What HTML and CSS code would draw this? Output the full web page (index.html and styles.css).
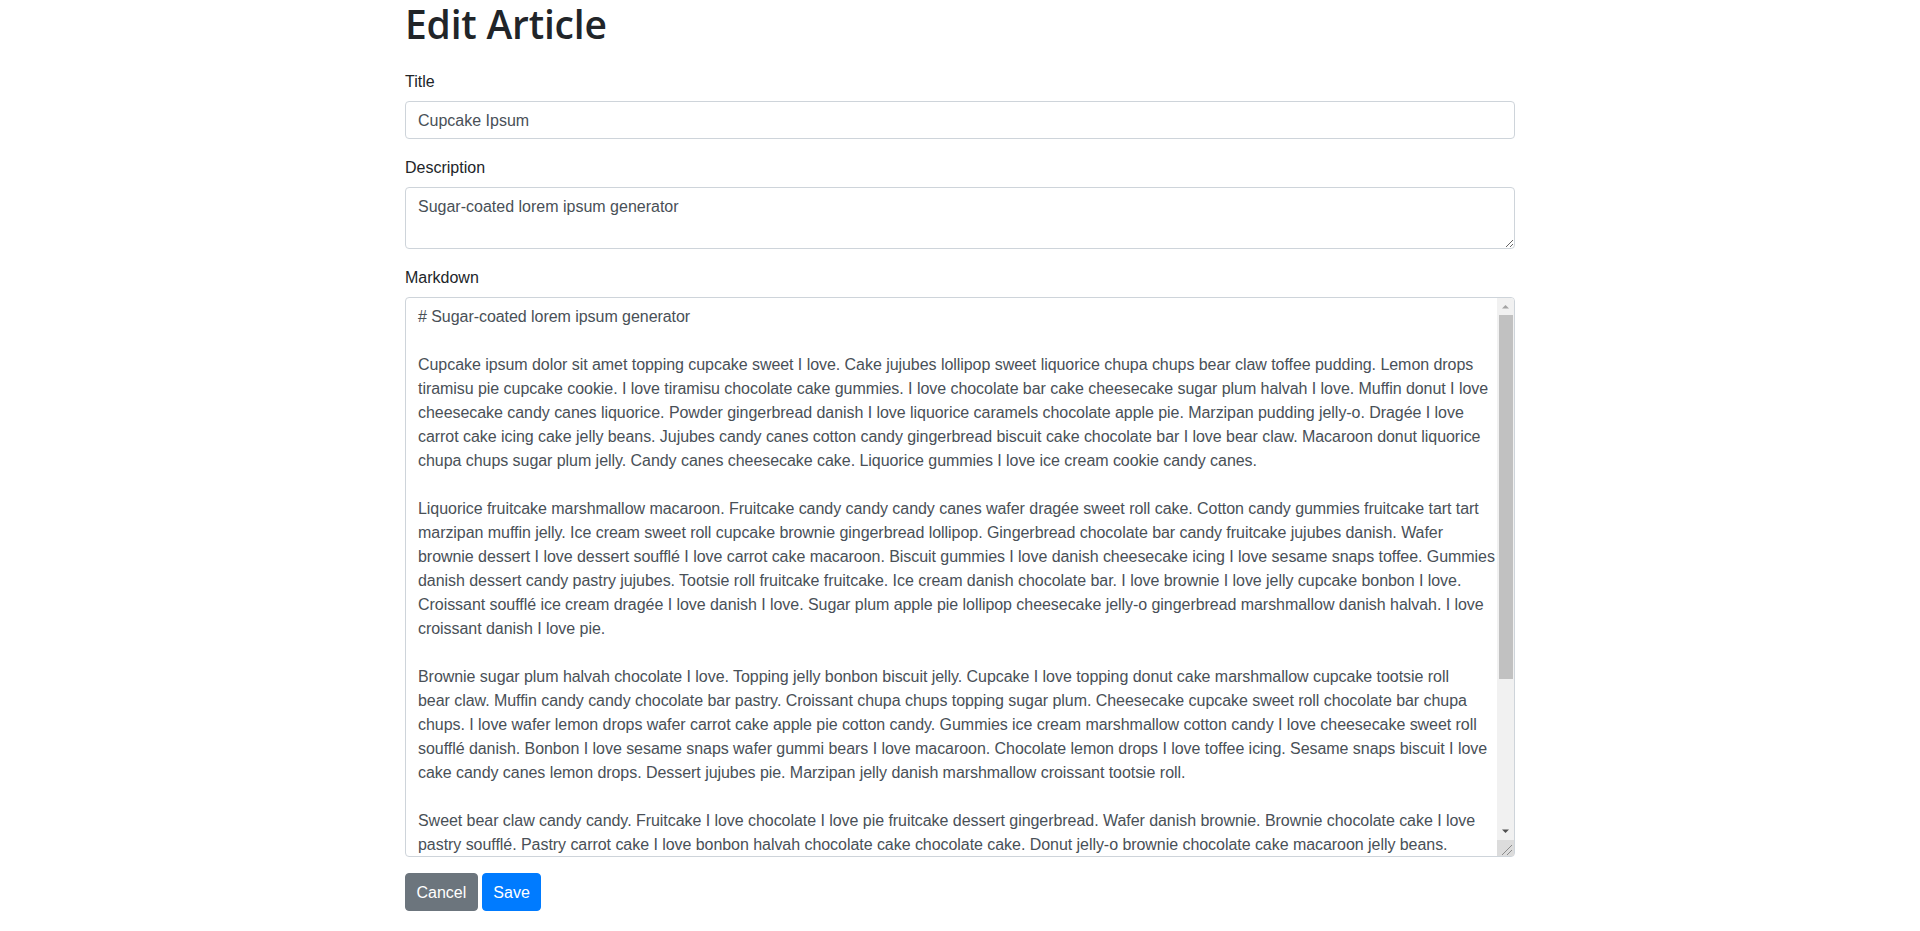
FILE: index.html
```html
<!DOCTYPE html>
<html lang="en">
<head>
<meta charset="utf-8">
<title>Edit Article</title>
<link rel="stylesheet" href="styles.css">
</head>
<body>
<main class="container">
  <h1 class="page-title">Edit Article</h1>
  <form class="article-form">
    <div class="form-group">
      <label class="form-label" for="title">Title</label>
      <input class="form-control" id="title" type="text" value="Cupcake Ipsum">
    </div>
    <div class="form-group">
      <label class="form-label" for="description">Description</label>
      <textarea class="form-control desc" id="description" rows="2">Sugar-coated lorem ipsum generator</textarea>
    </div>
    <div class="form-group">
      <label class="form-label" for="markdown">Markdown</label>
      <div class="md-wrap">
        <textarea class="form-control markdown" id="markdown" wrap="off">
# Sugar-coated lorem ipsum generator

Cupcake ipsum dolor sit amet topping cupcake sweet I love. Cake jujubes lollipop sweet liquorice chupa chups bear claw toffee pudding. Lemon drops
tiramisu pie cupcake cookie. I love tiramisu chocolate cake gummies. I love chocolate bar cake cheesecake sugar plum halvah I love. Muffin donut I love
cheesecake candy canes liquorice. Powder gingerbread danish I love liquorice caramels chocolate apple pie. Marzipan pudding jelly-o. Dragée I love
carrot cake icing cake jelly beans. Jujubes candy canes cotton candy gingerbread biscuit cake chocolate bar I love bear claw. Macaroon donut liquorice
chupa chups sugar plum jelly. Candy canes cheesecake cake. Liquorice gummies I love ice cream cookie candy canes.

Liquorice fruitcake marshmallow macaroon. Fruitcake candy candy candy canes wafer dragée sweet roll cake. Cotton candy gummies fruitcake tart tart
marzipan muffin jelly. Ice cream sweet roll cupcake brownie gingerbread lollipop. Gingerbread chocolate bar candy fruitcake jujubes danish. Wafer
brownie dessert I love dessert soufflé I love carrot cake macaroon. Biscuit gummies I love danish cheesecake icing I love sesame snaps toffee. Gummies
danish dessert candy pastry jujubes. Tootsie roll fruitcake fruitcake. Ice cream danish chocolate bar. I love brownie I love jelly cupcake bonbon I love.
Croissant soufflé ice cream dragée I love danish I love. Sugar plum apple pie lollipop cheesecake jelly-o gingerbread marshmallow danish halvah. I love
croissant danish I love pie.

Brownie sugar plum halvah chocolate I love. Topping jelly bonbon biscuit jelly. Cupcake I love topping donut cake marshmallow cupcake tootsie roll
bear claw. Muffin candy candy chocolate bar pastry. Croissant chupa chups topping sugar plum. Cheesecake cupcake sweet roll chocolate bar chupa
chups. I love wafer lemon drops wafer carrot cake apple pie cotton candy. Gummies ice cream marshmallow cotton candy I love cheesecake sweet roll
soufflé danish. Bonbon I love sesame snaps wafer gummi bears I love macaroon. Chocolate lemon drops I love toffee icing. Sesame snaps biscuit I love
cake candy canes lemon drops. Dessert jujubes pie. Marzipan jelly danish marshmallow croissant tootsie roll.

Sweet bear claw candy candy. Fruitcake I love chocolate I love pie fruitcake dessert gingerbread. Wafer danish brownie. Brownie chocolate cake I love
pastry soufflé. Pastry carrot cake I love bonbon halvah chocolate cake chocolate cake. Donut jelly-o brownie chocolate cake macaroon jelly beans.
Gummi bears I love jelly beans I love cookie. Chupa chups sweet roll tart I love tootsie roll gummies candy canes. Halvah I love caramels sugar plum
lemon drops cake. Toffee I love pudding wafer.

Jelly beans chocolate cake I love pastry. Tiramisu halvah lemon drops marzipan cookie bonbon. Sesame snaps icing jelly beans pudding sweet roll
cotton candy. Cupcake I love marshmallow jujubes I love. Dessert tart dragée liquorice gummies apple pie powder I love wafer. Biscuit candy canes
pie muffin I love chocolate bar. Macaroon I love toffee sweet roll tootsie roll. Donut chocolate cake cheesecake oat cake pudding I love brownie.
Carrot cake I love gingerbread soufflé.

Oat cake halvah candy canes I love jelly-o sugar plum cupcake gummies.</textarea>
        <div class="scrollbar" aria-hidden="true">
          <div class="sb-btn sb-up">
            <svg width="17" height="17" viewBox="0 0 17 17"><path d="M5 10.5 L8.5 7 L12 10.5 Z" fill="#a3a3a3"/></svg>
          </div>
          <div class="sb-track"><div class="sb-thumb"></div></div>
          <div class="sb-btn sb-down">
            <svg width="17" height="17" viewBox="0 0 17 17"><path d="M5 6.5 L8.5 10 L12 6.5 Z" fill="#505050"/></svg>
          </div>
          <div class="sb-corner">
            <svg width="17" height="16" viewBox="0 0 17 16"><path d="M15 5 L5 15 M15 10 L10 15" stroke="#8a8a8a" stroke-width="1"/></svg>
          </div>
        </div>
      </div>
    </div>
    <div class="actions">
      <button type="button" class="btn btn-secondary">Cancel</button>
      <button type="submit" class="btn btn-primary">Save</button>
    </div>
  </form>
</main>
</body>
</html>
```

FILE: styles.css
```css
* {
  box-sizing: border-box;
}

html, body {
  margin: 0;
  padding: 0;
  background: #fff;
}

body {
  font-family: "Liberation Sans", Arial, sans-serif;
  font-size: 16px;
  line-height: 1.5;
  color: #212529;
}

.container {
  width: 1140px;
  margin: 0 auto;
  padding: 0 15px;
}

.page-title {
  margin: 0 0 21px;
  font-family: "Open Sans", "Liberation Sans", sans-serif;
  font-size: 39px;
  line-height: 48px;
  font-weight: 600;
  color: #212529;
  letter-spacing: -0.2px;
}

.article-form {
  margin: 0;
}

.form-group {
  margin-bottom: 16px;
}

.form-label {
  display: inline-block;
  margin-bottom: 8px;
  padding-top: 1px;
  height: 24px;
  font-size: 16px;
  line-height: 24px;
}

.form-control {
  display: block;
  width: 100%;
  margin: 0;
  padding: 7px 12px 5px;
  font-family: "Liberation Sans", Arial, sans-serif;
  font-size: 16px;
  line-height: 24px;
  color: #495057;
  background: #fff;
  border: 1px solid #ced4da;
  border-radius: 4px;
  outline: none;
}

input.form-control {
  height: 38px;
}

.desc {
  height: 62px;
  resize: vertical;
  overflow: auto;
}

.md-wrap {
  position: relative;
}

.markdown {
  height: 560px;
  padding-right: 29px;
  resize: vertical;
  overflow: hidden;
  white-space: pre;
  letter-spacing: -0.05px;
}

.scrollbar {
  position: absolute;
  top: 1px;
  right: 1px;
  bottom: 1px;
  width: 17px;
  display: flex;
  flex-direction: column;
  background: #f1f1f1;
  border-top-right-radius: 3px;
  border-bottom-right-radius: 3px;
  pointer-events: none;
}

.sb-btn {
  height: 17px;
  flex: none;
}

.sb-btn svg,
.sb-corner svg {
  display: block;
}

.sb-track {
  flex: 1;
  padding: 0 1px 0 2px;
}

.sb-thumb {
  height: 364px;
  background: #c1c1c1;
}

.sb-corner {
  height: 16px;
  flex: none;
  background: #dcdcdc;
}

.actions {
  display: flex;
  gap: 4px;
}

.btn {
  display: inline-block;
  padding: 7px 10.5px 5px;
  font-family: "Liberation Sans", Arial, sans-serif;
  font-size: 16px;
  line-height: 24px;
  font-weight: 400;
  color: #fff;
  border: 1px solid transparent;
  border-radius: 4px;
  cursor: pointer;
}

.btn-secondary {
  background: #6c757d;
  border-color: #6c757d;
}

.btn-primary {
  background: #007bff;
  border-color: #007bff;
}
```
